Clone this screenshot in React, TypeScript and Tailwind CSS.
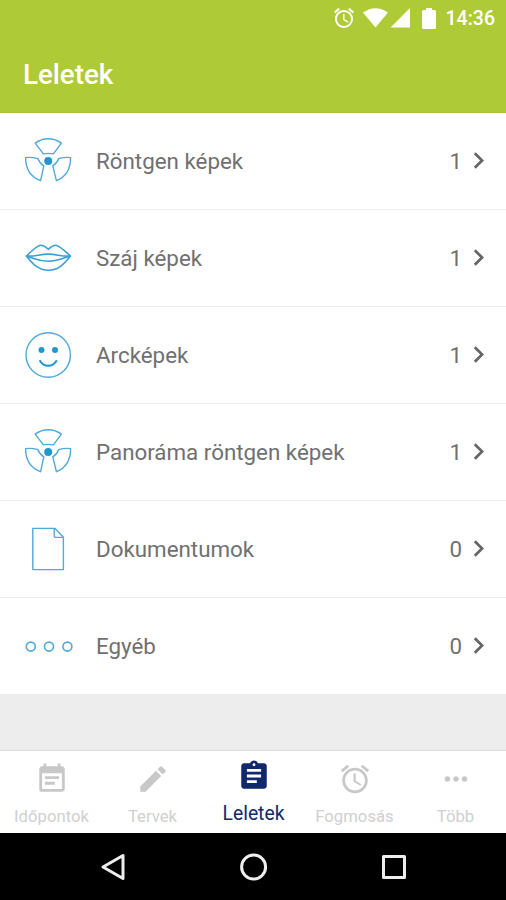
import React from "react";
import {
  MdAlarm,
  MdAssignment,
  MdChevronRight,
  MdEdit,
  MdEventNote,
  MdMoreHoriz,
} from "react-icons/md";

const RadiationIcon = () => (
  <svg viewBox="0 0.7 48 48" className="h-12 w-12" fill="none" stroke="#4fa9d9" strokeWidth="1.4" strokeLinejoin="round">
    <path d="M11.2 6.8Q17 2.4 24.2 2.4T37.4 6.8L29.4 17.6Q24.2 16.6 19.4 17.6Z" />
    <path d="M1.6 21.3Q8 20.6 14 22.4Q15.4 26.6 19.8 29.6L16.6 44.4Q1.6 39 1.6 21.3Z" />
    <path d="M46.6 21.3Q40.4 20.6 34.6 22.4Q33.2 26.6 28.8 29.6L32.4 44.4Q46.6 39 46.6 21.3Z" />
    <circle cx="24.2" cy="24.6" r="4" fill="#2196cf" stroke="none" />
  </svg>
);

const LipsIcon = () => (
  <svg viewBox="0 2.3 48 48" className="h-12 w-12" fill="none" stroke="#3a9fd3" strokeWidth="1.6" strokeLinejoin="round">
    <path d="M2.4 24.4C8 19 13 14 16.5 13.6C20 13.5 22 15.6 24.3 17.6C26.6 15.6 28.6 13.5 32 13.6C35.5 14 40.5 19 46.4 24.4C41 31 35 38.6 24.3 38.6S8 31 2.4 24.4Z" />
    <path d="M2.4 24.4C12 25 15 22.4 24.3 22.4S36 25 46.4 24.4C38 26.6 34 29.6 24.3 29.6S11 26.6 2.4 24.4Z" />
  </svg>
);

const FaceIcon = () => (
  <svg viewBox="0 0 48 48" className="h-12 w-12" fill="none" stroke="#4fa9d9">
    <circle cx="24.2" cy="24" r="22.2" strokeWidth="1.4" />
    <circle cx="17.5" cy="19" r="3" fill="#2196cf" stroke="none" />
    <circle cx="31" cy="19" r="3" fill="#2196cf" stroke="none" />
    <path d="M15.6 29.2Q18.6 34.8 24.2 34.8T32.8 29.2" stroke="#2196cf" strokeWidth="2" />
  </svg>
);

const DocumentIcon = () => (
  <svg viewBox="0 0 48 48" className="h-12 w-12" fill="none" stroke="#4fa9d9" strokeWidth="1.4" strokeLinejoin="round">
    <path d="M8.8 3.4H31L39.4 12.2V44.6H8.8Z" />
    <path d="M30.2 3.4V10.4Q30.2 12.4 32.2 12.4H39.4" />
  </svg>
);

const OtherIcon = () => (
  <svg viewBox="0 0 48 48" className="h-12 w-12 overflow-visible" fill="none" stroke="#4fa9d9" strokeWidth="1.6">
    <circle cx="6.8" cy="24.6" r="4.5" />
    <circle cx="25" cy="24.6" r="4.5" />
    <circle cx="43.4" cy="24.6" r="4.5" />
  </svg>
);

const records = [
  { label: "Röntgen képek", count: 1, icon: RadiationIcon },
  { label: "Száj képek", count: 1, icon: LipsIcon },
  { label: "Arcképek", count: 1, icon: FaceIcon },
  { label: "Panoráma röntgen képek", count: 1, icon: RadiationIcon },
  { label: "Dokumentumok", count: 0, icon: DocumentIcon },
  { label: "Egyéb", count: 0, icon: OtherIcon },
];

const tabs = [
  { label: "Időpontok", icon: MdEventNote },
  { label: "Tervek", icon: MdEdit },
  { label: "Leletek", icon: MdAssignment, active: true },
  { label: "Fogmosás", icon: MdAlarm },
  { label: "Több", icon: MdMoreHoriz },
];

function StatusBar() {
  return (
    <div className="flex h-9 items-center justify-end pr-[11px] text-white">
      <MdAlarm className="mr-[7px] h-6 w-6" />
      <svg viewBox="0 0 48 20" className="h-5 w-12" fill="currentColor">
        <path d="M0 4.6Q12.5-4 25 4.6L12.5 19.6Z" />
        <path d="M47 0V19.6H27.6Z" />
      </svg>
      <svg viewBox="0 0 14 21" className="ml-[11px] mr-[10px] h-[21px] w-[14px]" fill="currentColor">
        <path d="M4 0H10V2H12.5Q14 2 14 3.5V19.5Q14 21 12.5 21H1.5Q0 21 0 19.5V3.5Q0 2 1.5 2H4Z" />
      </svg>
      <span className="pt-px text-[19.5px] font-medium leading-none">14:36</span>
    </div>
  );
}

export default function App() {
  return (
    <div className="flex h-[900px] w-[506px] flex-col overflow-hidden bg-[#ededed] font-['Roboto',sans-serif]">
      <header className="h-[113px] shrink-0 border-b border-[#a9c23a] bg-[#afca37]">
        <StatusBar />
        <h1 className="pl-[23px] pt-[19px] text-[27.7px] font-medium leading-10 text-white">Leletek</h1>
      </header>

      <main className="shrink-0 bg-white">
        {records.map(({ label, count, icon: Icon }) => (
          <div key={label} className="flex h-[97px] items-center border-b border-[#ededed] pl-6 pr-[11px] text-[#707070]">
            <Icon />
            <span className="ml-6 flex-1 pt-[2px] text-[22.35px]">{label}</span>
            <span className="pt-[2px] text-[22.35px]">{count}</span>
            <MdChevronRight className="mb-px h-[33px] w-[33px] text-[#666666]" />
          </div>
        ))}
      </main>

      <nav className="mt-auto grid h-[83px] shrink-0 grid-cols-5 border-t border-[#dedede] bg-white pl-px">
        {tabs.map(({ label, icon: Icon, active }) => (
          <div
            key={label}
            className={
              active
                ? "flex flex-col items-center pt-[8px] text-[#10296b]"
                : "flex flex-col items-center pt-[11px] text-[#c8c8c8]"
            }
          >
            <Icon className="h-[34px] w-[34px]" />
            <span
              className={
                active
                  ? "mt-[9px] text-[19.3px] leading-6"
                  : "mt-[9px] text-[16.7px] leading-6 text-[#d0d0d0]"
              }
            >
              {label}
            </span>
          </div>
        ))}
      </nav>

      <div className="flex h-[67px] shrink-0 items-center justify-between bg-black pl-[97px] pr-[96px] text-[#eeeeee]">
        <svg viewBox="0 0 32 32" className="h-8 w-8" fill="none" stroke="currentColor" strokeWidth="3" strokeLinejoin="round">
          <path d="M26 4.5V27.5L6 16Z" />
        </svg>
        <svg viewBox="0 0 32 32" className="h-8 w-8" fill="none" stroke="currentColor" strokeWidth="3">
          <circle cx="15.6" cy="16" r="12" />
        </svg>
        <svg viewBox="0 0 32 32" className="h-8 w-8" fill="none" stroke="currentColor" strokeWidth="3" strokeLinejoin="round">
          <path d="M5.5 5.5H26.5V26.5H5.5Z" />
        </svg>
      </div>
    </div>
  );
}
